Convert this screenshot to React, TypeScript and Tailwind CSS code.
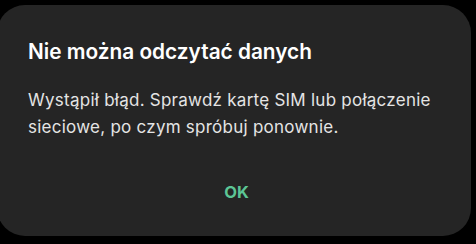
import React from 'react';

const App = () => {
  return (
    <div className="w-[476px] h-[244px] bg-black overflow-hidden pt-[5px] font-['Inter',sans-serif]">
      <div className="-ml-[3px] w-[474px] h-[231px] rounded-[28px] bg-[#252525] pl-[31px] pr-6 pt-[33px] flex flex-col">
        <h1 className="text-[20.8px] leading-[28px] font-semibold text-white">Nie można odczytać danych</h1>
        <p className="mt-[21px] text-[17px] leading-[27px] tracking-[0.25px] text-[#e4e4e4]">
          Wystąpił błąd. Sprawdź kartę SIM lub połączenie sieciowe, po czym spróbuj ponownie.
        </p>
        <div className="flex justify-center mt-[39px] pr-[2px]">
          <button className="text-[16.5px] font-bold text-[#5cc596]">OK</button>
        </div>
      </div>
    </div>
  );
};

export default App;
